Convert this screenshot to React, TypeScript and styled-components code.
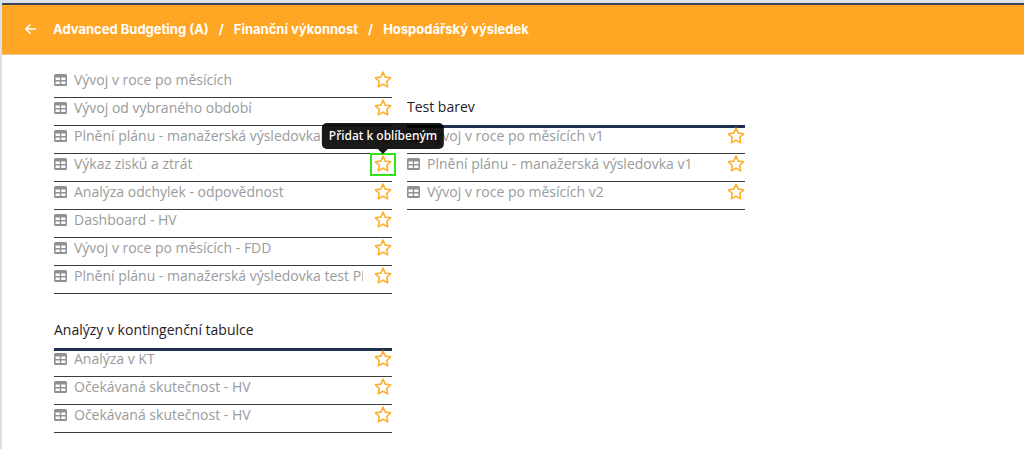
import React from "react";
import styled, { createGlobalStyle, css } from "styled-components";

const GlobalStyle = createGlobalStyle`
  * { box-sizing: border-box; }
  body {
    margin: 0;
    background: #fff;
    color: #1f2126;
    font-family: "Open Sans", "Liberation Sans", sans-serif;
    font-size: 14px;
    line-height: 20px;
  }
`;

const Page = styled.div`
  min-height: 100vh;
  border-top: 3px solid #dbe1eb;
  border-left: 2px solid #dbe1eb;
`;

const Header = styled.header`
  display: flex;
  align-items: center;
  gap: 15px;
  height: 52px;
  padding-left: 22px;
  padding-bottom: 2px;
  background: #ffa624;
  border-top: 2px solid #3f4357;
  border-bottom: 1px solid #eec78c;
  color: #fff;
`;

const BackButton = styled.button`
  display: flex;
  padding: 0;
  border: 0;
  background: none;
  color: inherit;
  cursor: pointer;
`;

const Breadcrumb = styled.nav`
  display: flex;
  gap: 10px;
  font-family: Inter, "Liberation Sans", sans-serif;
  font-size: 13px;
  font-weight: 700;
`;

const Crumb = styled.a`
  color: inherit;
  text-decoration: none;
`;

const Columns = styled.main`
  display: grid;
  grid-template-columns: repeat(2, minmax(0, 338px));
  gap: 15px;
  padding: 15px 16px 15px 52px;
`;

const Column = styled.div<{ $lowered?: boolean }>`
  display: flex;
  flex-direction: column;
  gap: 27px;
  padding-top: ${(p) => (p.$lowered ? 28 : 0)}px;
`;

const Heading = styled.h2`
  height: 30px;
  margin: 0 0 -2px;
  border-bottom: 3px solid #22304f;
  font-size: 14px;
  font-weight: 400;
  line-height: 18px;
`;

const List = styled.ul`
  margin: 0;
  padding: 0;
  list-style: none;
`;

const Row = styled.li`
  display: flex;
  align-items: flex-start;
  justify-content: space-between;
  height: 28px;
  border-bottom: 1px solid #3c3c3f;
`;

const ReportLink = styled.a`
  display: flex;
  align-items: center;
  gap: 7px;
  width: 309px;
  min-width: 0;
  color: #999b9c;
  line-height: 19px;
  text-decoration: none;
`;

const ReportName = styled.span`
  overflow: hidden;
  white-space: nowrap;
`;

const StarButton = styled.button<{ $active?: boolean }>`
  position: relative;
  display: flex;
  flex: none;
  height: 19px;
  margin: 1px -2px 0 0;
  padding: 0 2px;
  border: 0;
  background: none;
  color: #fdb02f;
  cursor: pointer;
  ${(p) =>
    p.$active &&
    css`
      outline: 2px solid #35e01c;
    `}
`;

const Tooltip = styled.span`
  position: absolute;
  z-index: 1;
  bottom: 100%;
  left: 50%;
  margin-bottom: 6px;
  padding: 3px 7px;
  border-radius: 5px;
  background: rgba(0, 0, 0, 0.9);
  color: #fff;
  font: 500 12px/20px "Noto Sans", sans-serif;
  white-space: nowrap;
  transform: translateX(-50%);

  &::after {
    content: "";
    position: absolute;
    top: 100%;
    left: 50%;
    margin-left: -5px;
    border: 5px solid transparent;
    border-bottom: 0;
    border-top-color: rgba(0, 0, 0, 0.9);
  }
`;

const ArrowIcon = () => (
  <svg width="14" height="14" viewBox="0 0 14 14" fill="none" stroke="currentColor" strokeWidth="1.6" strokeLinecap="round" strokeLinejoin="round" aria-hidden="true">
    <path d="M11.5 7H2M6 2.8 1.8 7 6 11.2" />
  </svg>
);

const TableIcon = styled(({ className }: { className?: string }) => (
  <svg className={className} width="13" height="12" viewBox="0 0 13 12" aria-hidden="true">
    <path
      fill="currentColor"
      fillRule="evenodd"
      d="M1.5 0h10A1.5 1.5 0 0 1 13 1.5v9a1.5 1.5 0 0 1-1.5 1.5h-10A1.5 1.5 0 0 1 0 10.5v-9A1.5 1.5 0 0 1 1.5 0ZM1.6 3.500v2.500h4.200V3.500Zm5.600 0v2.500h4.200V3.500ZM1.600 7.500v2.600h4.200V7.500Zm5.600 0v2.600h4.200V7.500Z"
    />
  </svg>
))`
  flex: none;
  color: #8f9192;
`;

const StarIcon = () => (
  <svg width="18" height="18" viewBox="0 0 18 18" fill="none" stroke="currentColor" strokeWidth="1.6" strokeLinejoin="round" aria-hidden="true">
    <path d="M9 1.2 11.2 6.1 16.6 6.8 12.7 10.5 13.7 15.9 9 13.3 4.3 15.9 5.3 10.5 1.4 6.8 6.8 6.1Z" />
  </svg>
);

interface ReportListProps {
  items: string[];
  highlighted?: number;
}

const ReportList = ({ items, highlighted }: ReportListProps) => (
  <List>
    {items.map((name, i) => (
      <Row key={i}>
        <ReportLink href="#">
          <TableIcon />
          <ReportName>{name}</ReportName>
        </ReportLink>
        <StarButton type="button" aria-label="Přidat k oblíbeným" $active={i === highlighted}>
          <StarIcon />
          {i === highlighted && <Tooltip role="tooltip">Přidat k oblíbeným</Tooltip>}
        </StarButton>
      </Row>
    ))}
  </List>
);

const reports = [
  "Vývoj v roce po měsících",
  "Vývoj od vybraného období",
  "Plnění plánu - manažerská výsledovka",
  "Výkaz zisků a ztrát",
  "Analýza odchylek - odpovědnost",
  "Dashboard - HV",
  "Vývoj v roce po měsících - FDD",
  "Plnění plánu - manažerská výsledovka test PR",
];
const pivots = ["Analýza v KT", "Očekávaná skutečnost - HV", "Očekávaná skutečnost - HV"];
const colorTests = [
  "Vývoj v roce po měsících v1",
  "Plnění plánu - manažerská výsledovka v1",
  "Vývoj v roce po měsících v2",
];

export default function App() {
  return (
    <>
      <GlobalStyle />
      <Page>
        <Header>
          <BackButton type="button" aria-label="Zpět">
            <ArrowIcon />
          </BackButton>
          <Breadcrumb>
            <Crumb href="#">Advanced Budgeting (A)</Crumb>
            <span>/</span>
            <Crumb href="#">Finanční výkonnost</Crumb>
            <span>/</span>
            <Crumb href="#">Hospodářský výsledek</Crumb>
          </Breadcrumb>
        </Header>
        <Columns>
          <Column>
            <ReportList items={reports} highlighted={3} />
            <section>
              <Heading>Analýzy v kontingenční tabulce</Heading>
              <ReportList items={pivots} />
            </section>
          </Column>
          <Column $lowered>
            <section>
              <Heading>Test barev</Heading>
              <ReportList items={colorTests} />
            </section>
          </Column>
        </Columns>
      </Page>
    </>
  );
}
